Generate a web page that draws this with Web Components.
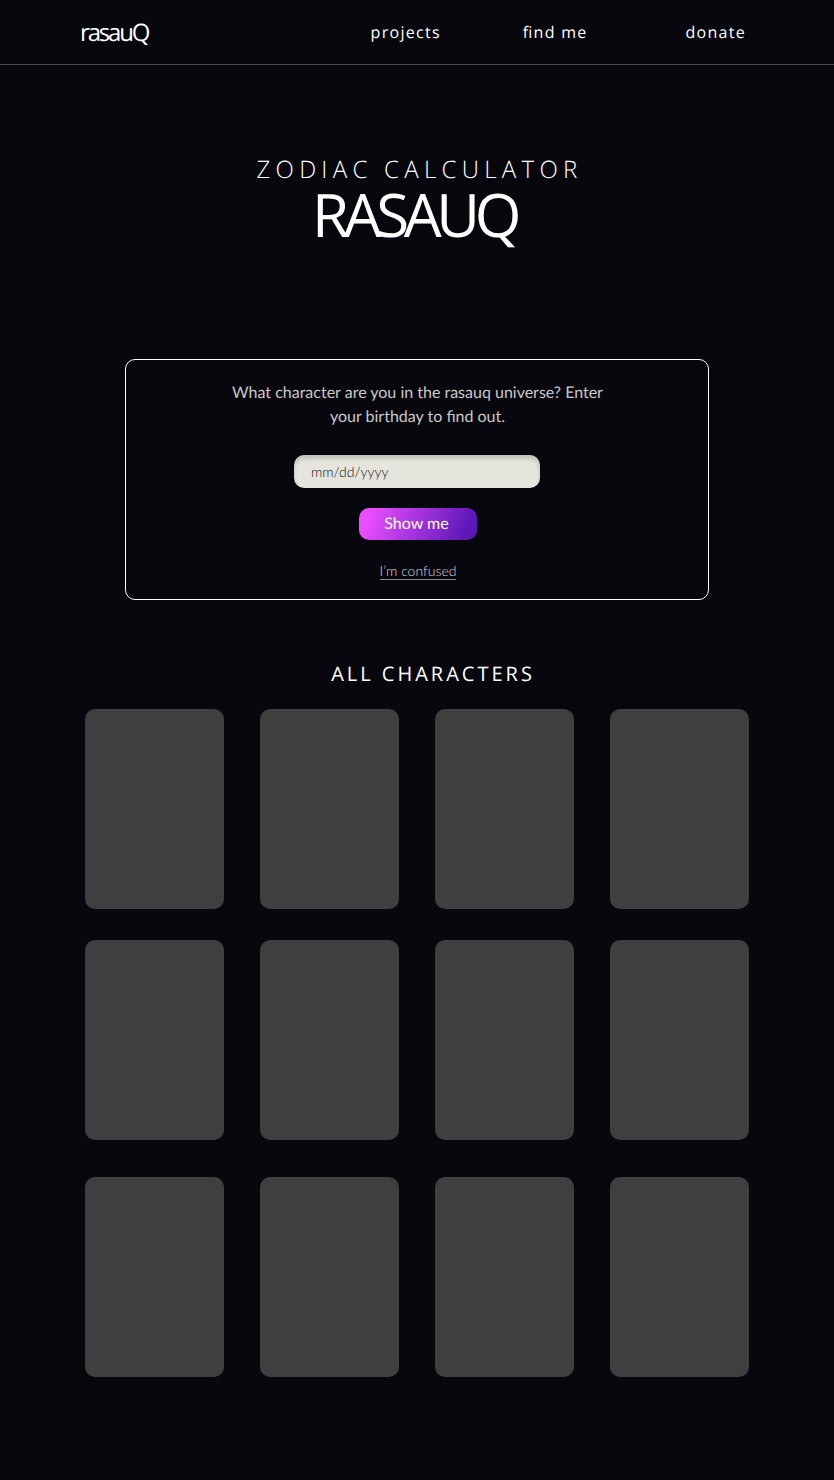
<!DOCTYPE html>
<html lang="en">
<head>
<meta charset="utf-8">
<title>rasauQ</title>
<style>
body { margin: 0; background: #08070d; color: #fff; font-family: "Open Sans", "Noto Sans", sans-serif; text-rendering: geometricPrecision; }
</style>
</head>
<body>
<zodiac-page></zodiac-page>
<script>
const define = (name, html) => customElements.define(name, class extends HTMLElement {
  constructor() {
    super();
    const t = document.createElement('template');
    t.innerHTML = html;
    this.attachShadow({ mode: 'open' }).append(t.content.cloneNode(true));
  }
});

define('site-header', `
<style>
:host { display: flex; box-sizing: border-box; height: 65px; padding: 0 88px 0 80px; align-items: center; border-bottom: 1px solid #4a4a4c; }
.logo { font-size: 24px; line-height: 32px; letter-spacing: -2.16px; padding-top: 2px; }
nav { margin-left: auto; display: flex; gap: 81px; font-size: 16px; line-height: 24px; letter-spacing: 1.28px; white-space: nowrap; }
.tight { letter-spacing: 0; }
.first { margin-right: 1px; }
.last { margin-left: 17px; }
</style>
<div class="logo">rasauQ</div>
<nav><span class="first">projects</span><span><span class="tight">f</span>ind me</span><span class="last">donate</span></nav>`);

define('page-title', `
<style>
:host { display: block; text-align: center; white-space: nowrap; }
.sub { font-size: 24px; line-height: 32px; font-weight: 300; letter-spacing: 5.28px; margin: 0; padding-left: 5px; }
h1 { font-size: 60px; line-height: 60px; font-weight: 400; letter-spacing: -5.4px; margin: -2px 0 0; padding-right: 6px; }
</style>
<p class="sub"><slot name="sub"></slot></p>
<h1><slot></slot></h1>`);

define('date-field', `
<style>
:host { display: block; box-sizing: border-box; width: 246px; height: 33px; padding-left: 17px; border-radius: 10px; background: #e5e5dd; box-shadow: inset 0 4px 4px rgba(0,0,0,.15);
  font: 300 14px/34px Lato, sans-serif; color: #111; }
</style><slot></slot>`);

define('glow-button', `
<style>
:host { display: block; box-sizing: border-box; width: 118px; height: 32px; padding-right: 2px; border-radius: 10px; text-align: center; font: 400 16px/32px Lato, sans-serif;
  color: #fff; background: linear-gradient(112deg, #e94dff 10%, #5c17b8 90%); }
</style><slot></slot>`);

define('birthday-card', `
<style>
:host { display: flex; flex-direction: column; align-items: center; box-sizing: border-box; width: 584px; height: 241px; padding-top: 21px;
  border: 1px solid #fff; border-radius: 10px; font-family: Lato, sans-serif; }
p { margin: 0 0 0 1px; width: 400px; text-align: center; font-size: 16px; line-height: 24px; color: #c9c9c9; }
date-field { margin-top: 26px; }
glow-button { margin-top: 20px; margin-left: 1px; }
a { margin: 22px 0 0 2px; height: 17px; font-size: 14px; line-height: 17px; font-weight: 300; color: #d8d8d8; border-bottom: 1px solid #8d8d8f; }
</style>
<p>What character are you in the rasauq universe? Enter<br>your birthday to find out.</p>
<date-field>mm/dd/yyyy</date-field>
<glow-button>Show me</glow-button>
<a>I’m confused</a>`);

define('character-tile', `
<style>:host { display: block; height: 200px; border-radius: 10px; background: #3f3f3f; }</style>`);

define('character-grid', `
<style>
:host { display: block; }
h2 { margin: 0 0 23px; padding-left: 32px; text-align: center; font-size: 20px; line-height: 24px; font-weight: 400; letter-spacing: 3px; }
.grid { display: grid; grid-template-columns: repeat(4, 139px); grid-template-rows: 231px 237px 200px; column-gap: 36px; padding-left: 85px; }
</style>
<h2>ALL CHARACTERS</h2>
<div class="grid">${'<character-tile></character-tile>'.repeat(12)}</div>`);

define('zodiac-page', `
<style>
:host { display: block; height: 1480px; overflow: hidden; }
page-title { padding-top: 89px; }
birthday-card { margin: 115px auto 0; }
character-grid { margin-top: 62px; }
</style>
<site-header></site-header>
<page-title><span slot="sub">ZODIAC CALCULATOR</span>RASAUQ</page-title>
<birthday-card></birthday-card>
<character-grid></character-grid>`);
</script>
</body>
</html>
